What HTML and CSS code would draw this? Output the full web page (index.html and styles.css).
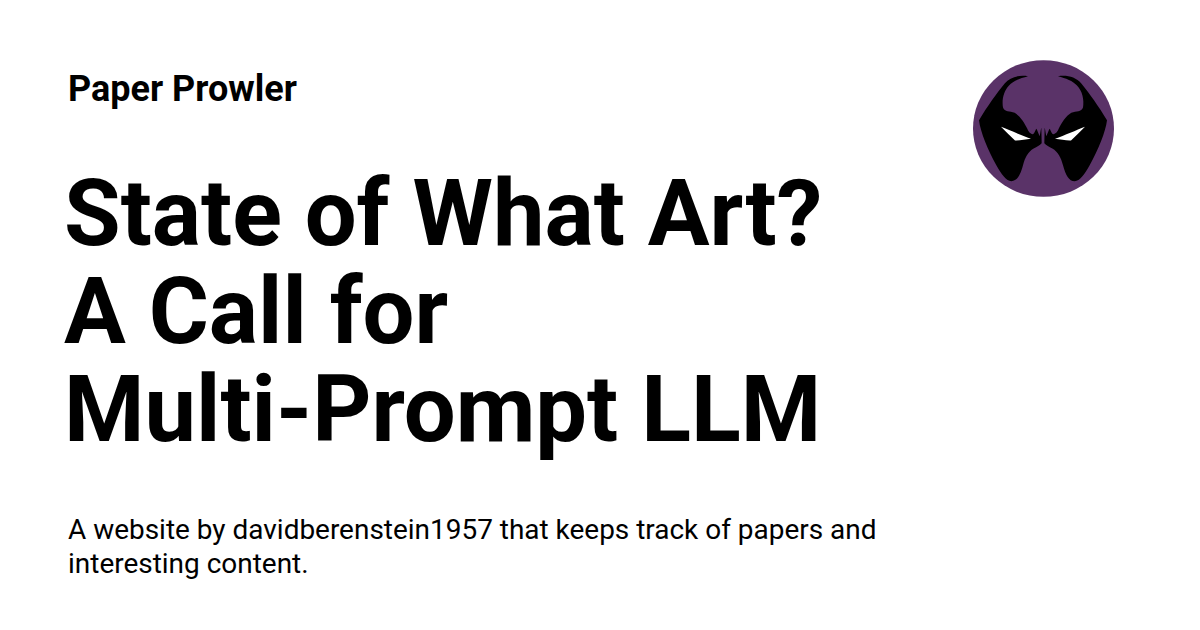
FILE: index.html
```html
<!DOCTYPE html>
<html lang="en">

<head>
    <meta charset="UTF-8">
    <title>State of What Art? A Call for Multi-Prompt LLM</title>
    <link rel="stylesheet" href="styles.css">
</head>

<body>
    <div class="card">
        <div class="content">
            <div class="site">Paper Prowler</div>
            <h1 class="title">State of What Art? A Call for <span class="nowrap">Multi-Prompt</span> LLM</h1>
            <p class="desc">A website by davidberenstein1957 that keeps track of papers and interesting content.</p>
        </div>
        <svg class="logo" viewBox="40 30 423 410">
            <defs>
                <path id="half" d="M205 78 C178 74 152 80 135 100 C112 128 82 170 58 210 C62 245 85 300 110 345 C125 372 140 392 155 393 C172 393 182 375 190 345 C196 322 205 305 222 295 C232 289 240 286 246 279 L245 232 C243 240 242 250 240 258 C236 250 233 240 230 236 C227 240 224 252 219 252 C212 252 206 244 203 236 C194 218 182 198 165 188 C150 182 135 186 130 172 C126 150 132 122 148 106 C160 92 182 84 205 78 Z" />
                <path id="eye" d="M124 230 C150 240 185 256 214 266 C198 267 180 272 166 271 C152 258 138 244 124 230 Z" />
            </defs>
            <ellipse class="disc" cx="251.5" cy="235" rx="211.5" ry="205" />
            <use class="mask" href="#half" />
            <use class="mask" href="#half" transform="matrix(-1 0 0 1 500 0)" />
            <use class="eye" href="#eye" />
            <use class="eye" href="#eye" transform="matrix(-1 0 0 1 500 0)" />
        </svg>
    </div>
</body>

</html>
```

FILE: styles.css
```css
body {
    margin: 0;
    background-color: white;
    color: black;
    font-family: 'Roboto', sans-serif;
}

.card {
    display: flex;
    justify-content: space-between;
    align-items: flex-start;
    width: 1200px;
    height: 630px;
    box-sizing: border-box;
    padding: 60px 86px 0 68px;
    overflow: hidden;
}

.content {
    width: 820px;
}

.site {
    font-size: 36px;
    font-weight: 700;
    line-height: 58px;
}

.title {
    margin: 47px 0 0 -4px;
    font-size: 92px;
    font-weight: 700;
    line-height: 98px;
}

.nowrap {
    white-space: nowrap;
}

.desc {
    margin: 53.5px 0 0;
    font-size: 27.96px;
    line-height: 34.5px;
}

.logo {
    display: block;
    flex: none;
    width: 141px;
    height: 137px;
}

.disc {
    fill: #5a3368;
}

.mask {
    fill: black;
}

.eye {
    fill: white;
}
```
